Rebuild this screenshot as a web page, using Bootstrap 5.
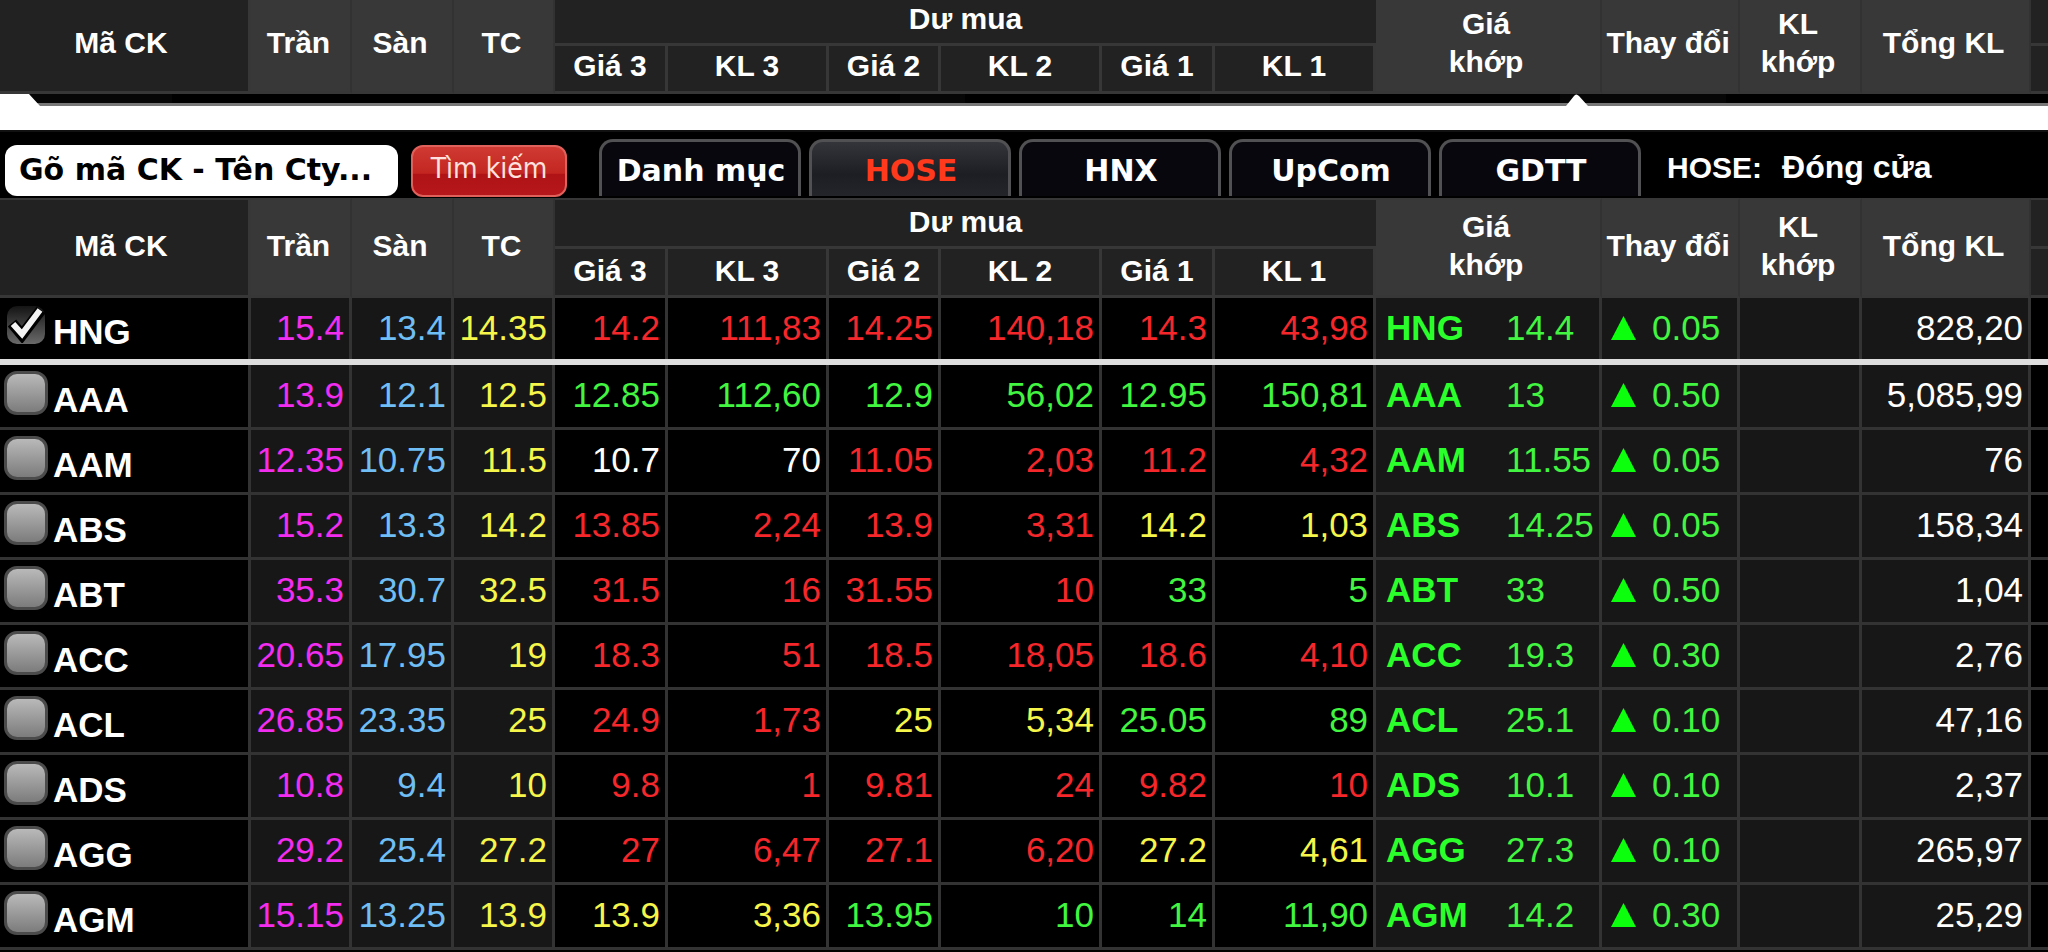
<!DOCTYPE html>
<html lang="vi">
<head>
<meta charset="utf-8">
<meta name="viewport" content="width=device-width, initial-scale=1">
<title>Bảng giá HOSE</title>
<link href="https://cdn.jsdelivr.net/npm/bootstrap@5.3.0/dist/css/bootstrap.min.css" rel="stylesheet">
<style>
  body { background: #000; color: #fff; font-family: "Liberation Sans", Arial, sans-serif; overflow-x: hidden; }

  .board { table-layout: fixed; width: 100%; border-collapse: separate; border-spacing: 0; white-space: nowrap; }
  .board th, .board td { padding: 0; border: 0 solid #333; overflow: hidden; }
  .board thead th { background: #222; font-size: 30px; line-height: 38px; font-weight: 700; text-align: center; vertical-align: middle; border-bottom: 3px solid #373737; }
  .board thead th.code { border-right: 3px solid #373737; padding-right: 6px; }
  .board thead th.lit { background: #383838; border-right: 2px solid #323232; padding-right: 4px; }
  .board thead tr.sub th { border-right: 3px solid #373737; }
  .board thead tr th.edge { border-right: 0; }
  .top-board .upper th { height: 46px; }
  .top-board .sub th { height: 48px; }
  .board.top-board thead th { padding-bottom: 5px; }
  .board.main-board thead th { padding-bottom: 3px; }
  .main-board .upper th { height: 51px; }
  .main-board .sub th { height: 49px; }
  .main-board .upper th { border-top: 2px solid #373737; }

  .board tbody td, .board tbody th { height: 65px; font-size: 35px; line-height: 40px; font-weight: 400; vertical-align: middle; text-align: right; padding: 0 5px 2px 0; border-right: 3px solid #333; border-bottom: 3px solid #333; }
  .board tbody tr.pinned > * { height: 61px; border-bottom: 0; }
  .board tbody tr.rule td { height: 6px; padding: 0; border: 0; background: #dedede; }
  .board tbody th { text-align: left; font-weight: 700; padding: 0 0 2px 4px; }
  .board tbody td.g { background: #171717; }
  .board tbody td.last { border-right: 0; }
  .board tbody .match { text-align: left; padding-left: 10px; }
  .board tbody .delta { text-align: left; padding-left: 9px; }
  .sym { width: 120px; font-weight: 700; color: #2bff2b; }
  .ceil { color: #f32df0; } .floor { color: #6fbef5; } .ref { color: #f5f54a; }
  .down { color: #f5272b; } .up { color: #41f541; } .same { color: #f5f54a; }

  .pick { appearance: none; flex: none; width: 44px; height: 44px; margin: 0; border: 3px solid #4b4b4b; border-radius: 13px; background: linear-gradient(#b9b9b9, #7c7c7c); }
  .pick:checked { border-color: #000; background: linear-gradient(#141414, #6a6a6a); }
  .tick { left: 4px; top: 2px; pointer-events: none; }
  .code-name { margin-left: 5px; padding-top: 9px; }

  .gap-strip { height: 36px; background: linear-gradient(#060606 0 9px, #777 9px 12px, #fff 12px); }
  .gap-strip svg { display: block; width: 100%; height: 12px; }
  .bar { height: 68px; padding: 13px 0 0 5px; border-top: 2px solid #111; }
  .find { width: 393px; height: 51px; padding: 0 14px 2px; border: 0; border-radius: 12px; font: 700 30px "DejaVu Sans", Verdana, sans-serif; color: #000; }
  .find::placeholder { color: #000; opacity: 1; }
  .go { width: 156px; height: 52px; margin-left: 13px; padding: 0 0 6px; border: 2px solid #e0615c; border-radius: 12px; background: linear-gradient(#cf3a33, #c32620 55%, #b01316 56%, #b5171a); color: #ffe2de; font: 400 28px "DejaVu Sans Condensed", "DejaVu Sans", sans-serif; }
  .tabs { margin: -6px 0 0 32px; gap: 8px; }
  .tab { width: 202px; height: 57px; border: 3px solid #515153; border-bottom: 0; border-radius: 14px 14px 0 0; background: #07070d; color: #fff; font: 700 30px "DejaVu Sans", Verdana, sans-serif; padding: 2px 0 0 2px; white-space: nowrap; }
  .tab.on { background: linear-gradient(#34353a, #1d1e23 60%, #24252a); color: #ff3a1c; }
  .status { font-size: 30px; font-weight: 700; line-height: 36px; margin: 4px 0 0 26px; gap: 20px; }
  .phase { font-size: 32px; }
</style>
</head>
<body>
<table class="board top-board">
  <colgroup class="cols"></colgroup>
  <thead></thead>
</table>
<div class="gap-strip">
  <svg viewBox="0 0 2048 12" preserveAspectRatio="none" aria-hidden="true">
    <path d="M172 0H900V9H172ZM965 0H1200V9H965ZM1330 0H1560V9H1330ZM1726 0H2048V9H1726Z" fill="#000"/>
    <path d="M0 0H29L40 12H0ZM1566 12L1574 2Q1576 -1 1579 2L1588 12Z" fill="#fff"/>
  </svg>
</div>
<form class="bar d-flex align-items-start" onsubmit="return false">
  <input class="find" type="text" placeholder="Gõ mã CK - Tên Cty..." aria-label="Gõ mã CK - Tên Cty">
  <button class="go" type="submit">Tìm kiếm</button>
  <div class="tabs d-flex">
    <button class="tab" type="button">Danh mục</button>
    <button class="tab on" type="button">HOSE</button>
    <button class="tab" type="button">HNX</button>
    <button class="tab" type="button">UpCom</button>
    <button class="tab" type="button">GDTT</button>
  </div>
  <div class="status d-flex align-items-baseline text-nowrap"><span>HOSE:</span><span class="phase">Đóng cửa</span></div>
</form>
<table class="board main-board">
  <colgroup class="cols"></colgroup>
  <thead></thead>
  <tbody></tbody>
</table>
<script>
  const widths = [251, 101, 102, 101, 113, 161, 112, 161, 113, 161, 226, 138, 122, 169, 17];
  document.querySelectorAll('.cols').forEach(g => {
    g.innerHTML = widths.map(w => `<col style="width:${w}px">`).join('');
  });
  const lit = t => `<th class="lit" rowspan="2" scope="col">${t}</th>`;
  document.querySelectorAll('thead').forEach(h => {
    h.innerHTML = `<tr class="upper"><th class="code" rowspan="2" scope="col">Mã CK</th>${lit('Trần')}${lit('Sàn')}${lit('TC')}
      <th colspan="6" scope="colgroup">Dư mua</th>${lit('Giá<br>khớp')}${lit('Thay đổi')}${lit('KL<br>khớp')}${lit('Tổng KL')}<th class="edge"></th></tr>
      <tr class="sub">${['Giá 3', 'KL 3', 'Giá 2', 'KL 2', 'Giá 1', 'KL 1'].map(t => `<th scope="col">${t}</th>`).join('')}<th class="edge"></th></tr>`;
  });

  // code, ceiling, floor, reference, six bid cells, bid colours, match price, change, volume
  const rows = [
    ['HNG', '15.4', '13.4', '14.35', '14.2 111,83 14.25 140,18 14.3 43,98', 'dddddd', '14.4', '0.05', '828,20'],
    ['AAA', '13.9', '12.1', '12.5', '12.85 112,60 12.9 56,02 12.95 150,81', 'uuuuuu', '13', '0.50', '5,085,99'],
    ['AAM', '12.35', '10.75', '11.5', '10.7 70 11.05 2,03 11.2 4,32', 'wwdddd', '11.55', '0.05', '76'],
    ['ABS', '15.2', '13.3', '14.2', '13.85 2,24 13.9 3,31 14.2 1,03', 'ddddss', '14.25', '0.05', '158,34'],
    ['ABT', '35.3', '30.7', '32.5', '31.5 16 31.55 10 33 5', 'dddduu', '33', '0.50', '1,04'],
    ['ACC', '20.65', '17.95', '19', '18.3 51 18.5 18,05 18.6 4,10', 'dddddd', '19.3', '0.30', '2,76'],
    ['ACL', '26.85', '23.35', '25', '24.9 1,73 25 5,34 25.05 89', 'ddssuu', '25.1', '0.10', '47,16'],
    ['ADS', '10.8', '9.4', '10', '9.8 1 9.81 24 9.82 10', 'dddddd', '10.1', '0.10', '2,37'],
    ['AGG', '29.2', '25.4', '27.2', '27 6,47 27.1 6,20 27.2 4,61', 'ddddss', '27.3', '0.10', '265,97'],
    ['AGM', '15.15', '13.25', '13.9', '13.9 3,36 13.95 10 14 11,90', 'ssuuuu', '14.2', '0.30', '25,29']
  ];
  const tone = { d: 'down', u: 'up', s: 'same', w: '' };
  const tick = '<svg class="tick position-absolute" width="38" height="38" viewBox="0 0 38 38" aria-hidden="true"><path d="M4 18L14 30L33 5" fill="none" stroke="#000" stroke-width="11"/><path d="M5 19L14 29L32 5" fill="none" stroke="#f4f4f4" stroke-width="6"/></svg>';
  document.querySelector('tbody').innerHTML = rows.map((r, i) => {
    const bids = r[4].split(' ').map((v, k) => `<td class="${tone[r[5][k]]}">${v}</td>`).join('');
    return `<tr class="${i ? '' : 'pinned'}"><th scope="row"><label class="d-flex position-relative"><input class="pick" type="checkbox" ${i ? '' : 'checked'}>${i ? '' : tick}<span class="code-name">${r[0]}</span></label></th>
      <td class="g ceil">${r[1]}</td><td class="g floor">${r[2]}</td><td class="g ref">${r[3]}</td>${bids}
      <td class="g match up"><span class="sym d-inline-block">${r[0]}</span>${r[6]}</td>
      <td class="g delta up"><svg width="25" height="24" viewBox="0 0 25 24" class="me-3 align-baseline" aria-label="tăng"><path d="M12.500 0L25 24H0Z" fill="#0cff0c"/></svg>${r[7]}</td>
      <td class="g"></td><td class="g">${r[8]}</td><td class="last"></td></tr>${i ? '' : '<tr class="rule"><td colspan="15"></td></tr>'}`;
  }).join('');
</script>
<script src="https://cdn.jsdelivr.net/npm/bootstrap@5.3.0/dist/js/bootstrap.bundle.min.js"></script>
</body>
</html>
